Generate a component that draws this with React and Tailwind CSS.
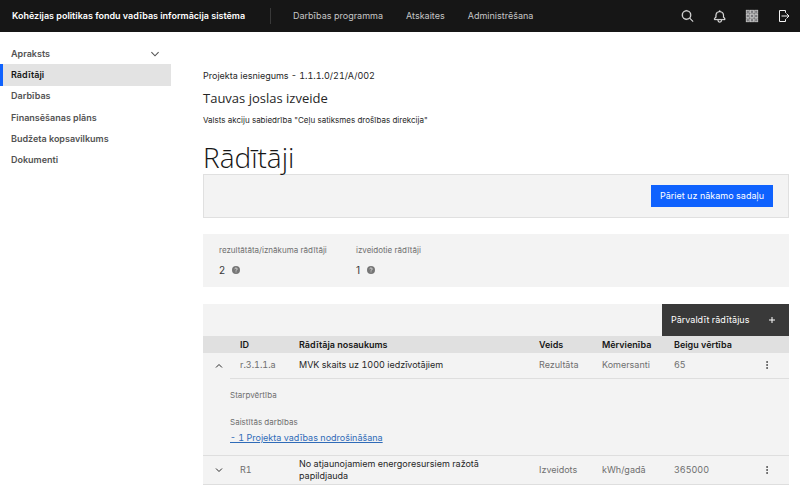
import React from "react";

const navItems = ["Darbības programma", "Atskaites", "Administrēšana"];
const sideItems = ["Apraksts", "Rādītāji", "Darbības", "Finansēšanas plāns", "Budžeta kopsavilkums", "Dokumenti"];

function Search() {
  return (
    <svg className="size-4" viewBox="0 0 32 32" fill="currentColor" aria-hidden="true">
      <path d="M29 27.586l-7.552-7.552a11.018 11.018 0 1 0-1.414 1.414L27.586 29zM4 13a9 9 0 1 1 9 9 9.01 9.01 0 0 1-9-9z" transform="translate(2 3) scale(.85)" stroke="currentColor" strokeWidth="0.6" />
    </svg>
  );
}

function Bell() {
  return (
    <svg className="size-4" viewBox="0 0 32 32" fill="currentColor" aria-hidden="true">
      <path d="M28.707 19.293L26 16.586V13a10.014 10.014 0 0 0-9-9.95V1h-2v2.05A10.014 10.014 0 0 0 6 13v3.586l-2.707 2.707A1 1 0 0 0 3 20v3a1 1 0 0 0 1 1h7v1a5 5 0 0 0 10 0v-1h7a1 1 0 0 0 1-1v-3a1 1 0 0 0-.293-.707zM19 25a3 3 0 0 1-6 0v-1h6zm8-3H5v-1.586l2.707-2.707A1 1 0 0 0 8 17v-4a8 8 0 0 1 16 0v4a1 1 0 0 0 .293.707L27 20.414z" transform="translate(2 4) scale(.84)" stroke="currentColor" strokeWidth="0.6" />
    </svg>
  );
}

function Grid() {
  const steps = [0, 1, 2];
  return (
    <svg className="size-4" viewBox="0 0 16 16" fill="#77777b" stroke="#c4c4c4" aria-hidden="true">
      {steps.map((r) => steps.map((c) => (
        <rect key={r + "-" + c} x={2.3 + c * 4.2} y={2.3 + r * 4.2} width="3" height="3" strokeWidth="0.9" />
      )))}
    </svg>
  );
}

function Logout() {
  return (
    <svg className="size-4" viewBox="0 0 16 16" fill="none" stroke="currentColor" strokeWidth="1" aria-hidden="true">
      <path d="M9.5 4.8V2.5h-6v11h6v-2.3M5.5 8h7.5M10.5 5.5L13 8l-2.5 2.5" />
    </svg>
  );
}

function Chevron({ up, className }) {
  return (
    <svg className={className} viewBox="0 0 10 10" fill="none" stroke="currentColor" strokeWidth="0.9" aria-hidden="true">
      <path d={up ? "M2 6.5L5 3.5l3 3" : "M2 3.5L5 6.5l3-3"} />
    </svg>
  );
}

function Help() {
  return (
    <svg className="size-2" viewBox="0 0 8 8" aria-hidden="true">
      <circle cx="4" cy="4" r="4" fill="#767676" />
      <path d="M2.8 3.2c0-1.6 2.4-1.6 2.4-.1 0 .9-1.2.8-1.2 1.6M4 5.5v.8" fill="none" stroke="#f3f3f3" strokeWidth="0.8" />
    </svg>
  );
}

function Stat({ label, value }) {
  return (
    <div className="w-[137px]">
      <dt className="text-[8px] leading-3 text-[#6f6f6f]">{label}</dt>
      <dd className="mt-2 flex items-center gap-[7px] text-[10px] leading-3 text-[#393939]">
        {value}
        <Help />
      </dd>
    </div>
  );
}

function IndicatorRow({ id, name, kind, unit, value, open }) {
  const line = open ? "border-b border-[#dedede]" : "";
  return (
    <tr className={open ? "h-[25px]" : "h-[29px] border-y border-[#dedede]"}>
      <td className="pl-[11px]">
        <button type="button" aria-label={"Izvērst " + id} aria-expanded={Boolean(open)} className="block text-[#161616]">
          <Chevron up={open} className="size-2.5" />
        </button>
      </td>
      <td className={"pl-2.5 tabular-nums " + line}>{id}</td>
      <td className={"pr-8 tabular-nums text-[#262626] " + line}>{name}</td>
      <td className={line}>{kind}</td>
      <td className={line}>{unit}</td>
      <td className={"tabular-nums " + line}>{value}</td>
      <td className={line}>
        <button type="button" aria-label={"Darbības: " + id} className="mx-auto block">
          <svg className="size-2.5" viewBox="0 0 10 10" fill="#161616" aria-hidden="true">
            <path d="M4.4 1.3h1.4v1.4H4.4zM4.4 4.3h1.4v1.4H4.4zM4.4 7.3h1.4v1.4H4.4z" />
          </svg>
        </button>
      </td>
    </tr>
  );
}

export default function App() {
  return (
    <div className="min-h-screen bg-white font-[Inter,'Noto_Sans',sans-serif] text-[9px] leading-3 text-[#262626]">
      <header className="flex h-8 items-center bg-[#161616] pr-2 text-[#c6c6c6]">
        <a href="#" className="w-[270px] whitespace-nowrap pl-3 font-semibold text-white">Kohēzijas politikas fondu vadības informācija sistēma</a>
        <nav className="flex h-4 items-center gap-[23px] border-l border-[#393939] pl-[22px]">
          {navItems.map((n) => <a key={n} href="#">{n}</a>)}
        </nav>
        <div className="ml-auto flex gap-4 text-[#f4f4f4]">
          <button type="button" aria-label="Meklēt"><Search /></button>
          <button type="button" aria-label="Paziņojumi"><Bell /></button>
          <button type="button" aria-label="Lietotnes"><Grid /></button>
          <button type="button" aria-label="Iziet"><Logout /></button>
        </div>
      </header>

      <div className="flex">
        <nav className="w-[171px] shrink-0 pt-[11px]">
          <ul className="grid h-32 grid-rows-6">
            {sideItems.map((s, i) => (
              <li key={s} className="grid">
                <a
                  href="#"
                  aria-current={i === 1 ? "page" : undefined}
                  className={"flex items-center justify-between border-l-3 pr-2.5 pl-2 font-semibold " + (i === 1 ? "border-[#0f62fe] bg-[#e3e3e3] text-[#161616]" : "border-transparent text-[#525252]")}
                >
                  {s}
                  {i === 0 && <Chevron className="size-3" />}
                </a>
              </li>
            ))}
          </ul>
        </nav>

        <main className="min-w-0 flex-1 pt-[38px] pr-[11px] pl-8">
          <p className="tabular-nums">Projekta iesniegums - 1.1.1.0/21/A/002</p>
          <h2 className="mt-1.5 font-['Open_Sans',sans-serif] text-[13px] leading-5">Tauvas joslas izveide</h2>
          <p className="mt-1.5 text-[8px] leading-3">Valsts akciju sabiedrība "Ceļu satiksmes drošības direkcija"</p>
          <h1 className="mt-3.5 font-['Open_Sans',sans-serif] text-[28px] leading-[34px] font-light text-[#161616]">Rādītāji</h1>

          <div className="flex h-11 items-center justify-end border border-[#e0e0e0] bg-[#f3f3f3] pr-[15px]">
            <button type="button" className="h-[22px] bg-[#0f62fe] px-[9px] whitespace-nowrap text-white">Pāriet uz nākamo sadaļu</button>
          </div>

          <dl className="mt-4 flex h-[53px] bg-[#f3f3f3] px-4 pt-2.5">
            <Stat label="rezultātāta/iznākuma rādītāji" value="2" />
            <Stat label="izveidotie rādītāji" value="1" />
          </dl>

          <section className="mt-[17px] bg-[#f3f3f3]">
            <div className="flex justify-end">
              <button type="button" className="flex h-8 w-[127px] items-center justify-between bg-[#393939] pr-3 pl-[9px] text-white">
                Pārvaldīt rādītājus
                <svg className="size-2.5" viewBox="0 0 10 10" stroke="currentColor" aria-hidden="true"><path d="M5 2v6M2 5h6" /></svg>
              </button>
            </div>
            <table className="w-full table-fixed border-collapse text-left text-[#6f6f6f]">
              <colgroup>
                <col className="w-[27px]" />
                <col className="w-[69px]" />
                <col />
                <col className="w-[63px]" />
                <col className="w-[72px]" />
                <col className="w-[71px]" />
                <col className="w-[44px]" />
              </colgroup>
              <thead>
                <tr className="h-[17px] bg-[#e0e0e0] text-[#161616]">
                  <td />
                  <th scope="col" className="pl-2.5 font-semibold">ID</th>
                  <th scope="col" className="font-semibold">Rādītāja nosaukums</th>
                  <th scope="col" className="font-semibold">Veids</th>
                  <th scope="col" className="font-semibold">Mērvienība</th>
                  <th scope="col" className="font-semibold whitespace-nowrap">Beigu vērtība</th>
                  <td />
                </tr>
              </thead>
              <tbody>
                <IndicatorRow open id="r.3.1.1.a" name="MVK skaits uz 1000 iedzīvotājiem" kind="Rezultāta" unit="Komersanti" value="65" />
                <tr>
                  <td colSpan={7} className="pt-2.5 pb-[11px] pl-[27px]">
                    <p className="text-[8px] leading-3">Starpvērtība</p>
                    <p className="mt-[15px] text-[8px] leading-3">Saistītās darbības</p>
                    <a href="#" className="mt-1 inline-block text-[#2f6bb8] tabular-nums underline">- 1 Projekta vadības nodrošināšana</a>
                  </td>
                </tr>
                <IndicatorRow id="R1" name="No atjaunojamiem energoresursiem ražotā papildjauda" kind="Izveidots" unit="kWh/gadā" value="365000" />
              </tbody>
            </table>
          </section>
        </main>
      </div>
    </div>
  );
}
